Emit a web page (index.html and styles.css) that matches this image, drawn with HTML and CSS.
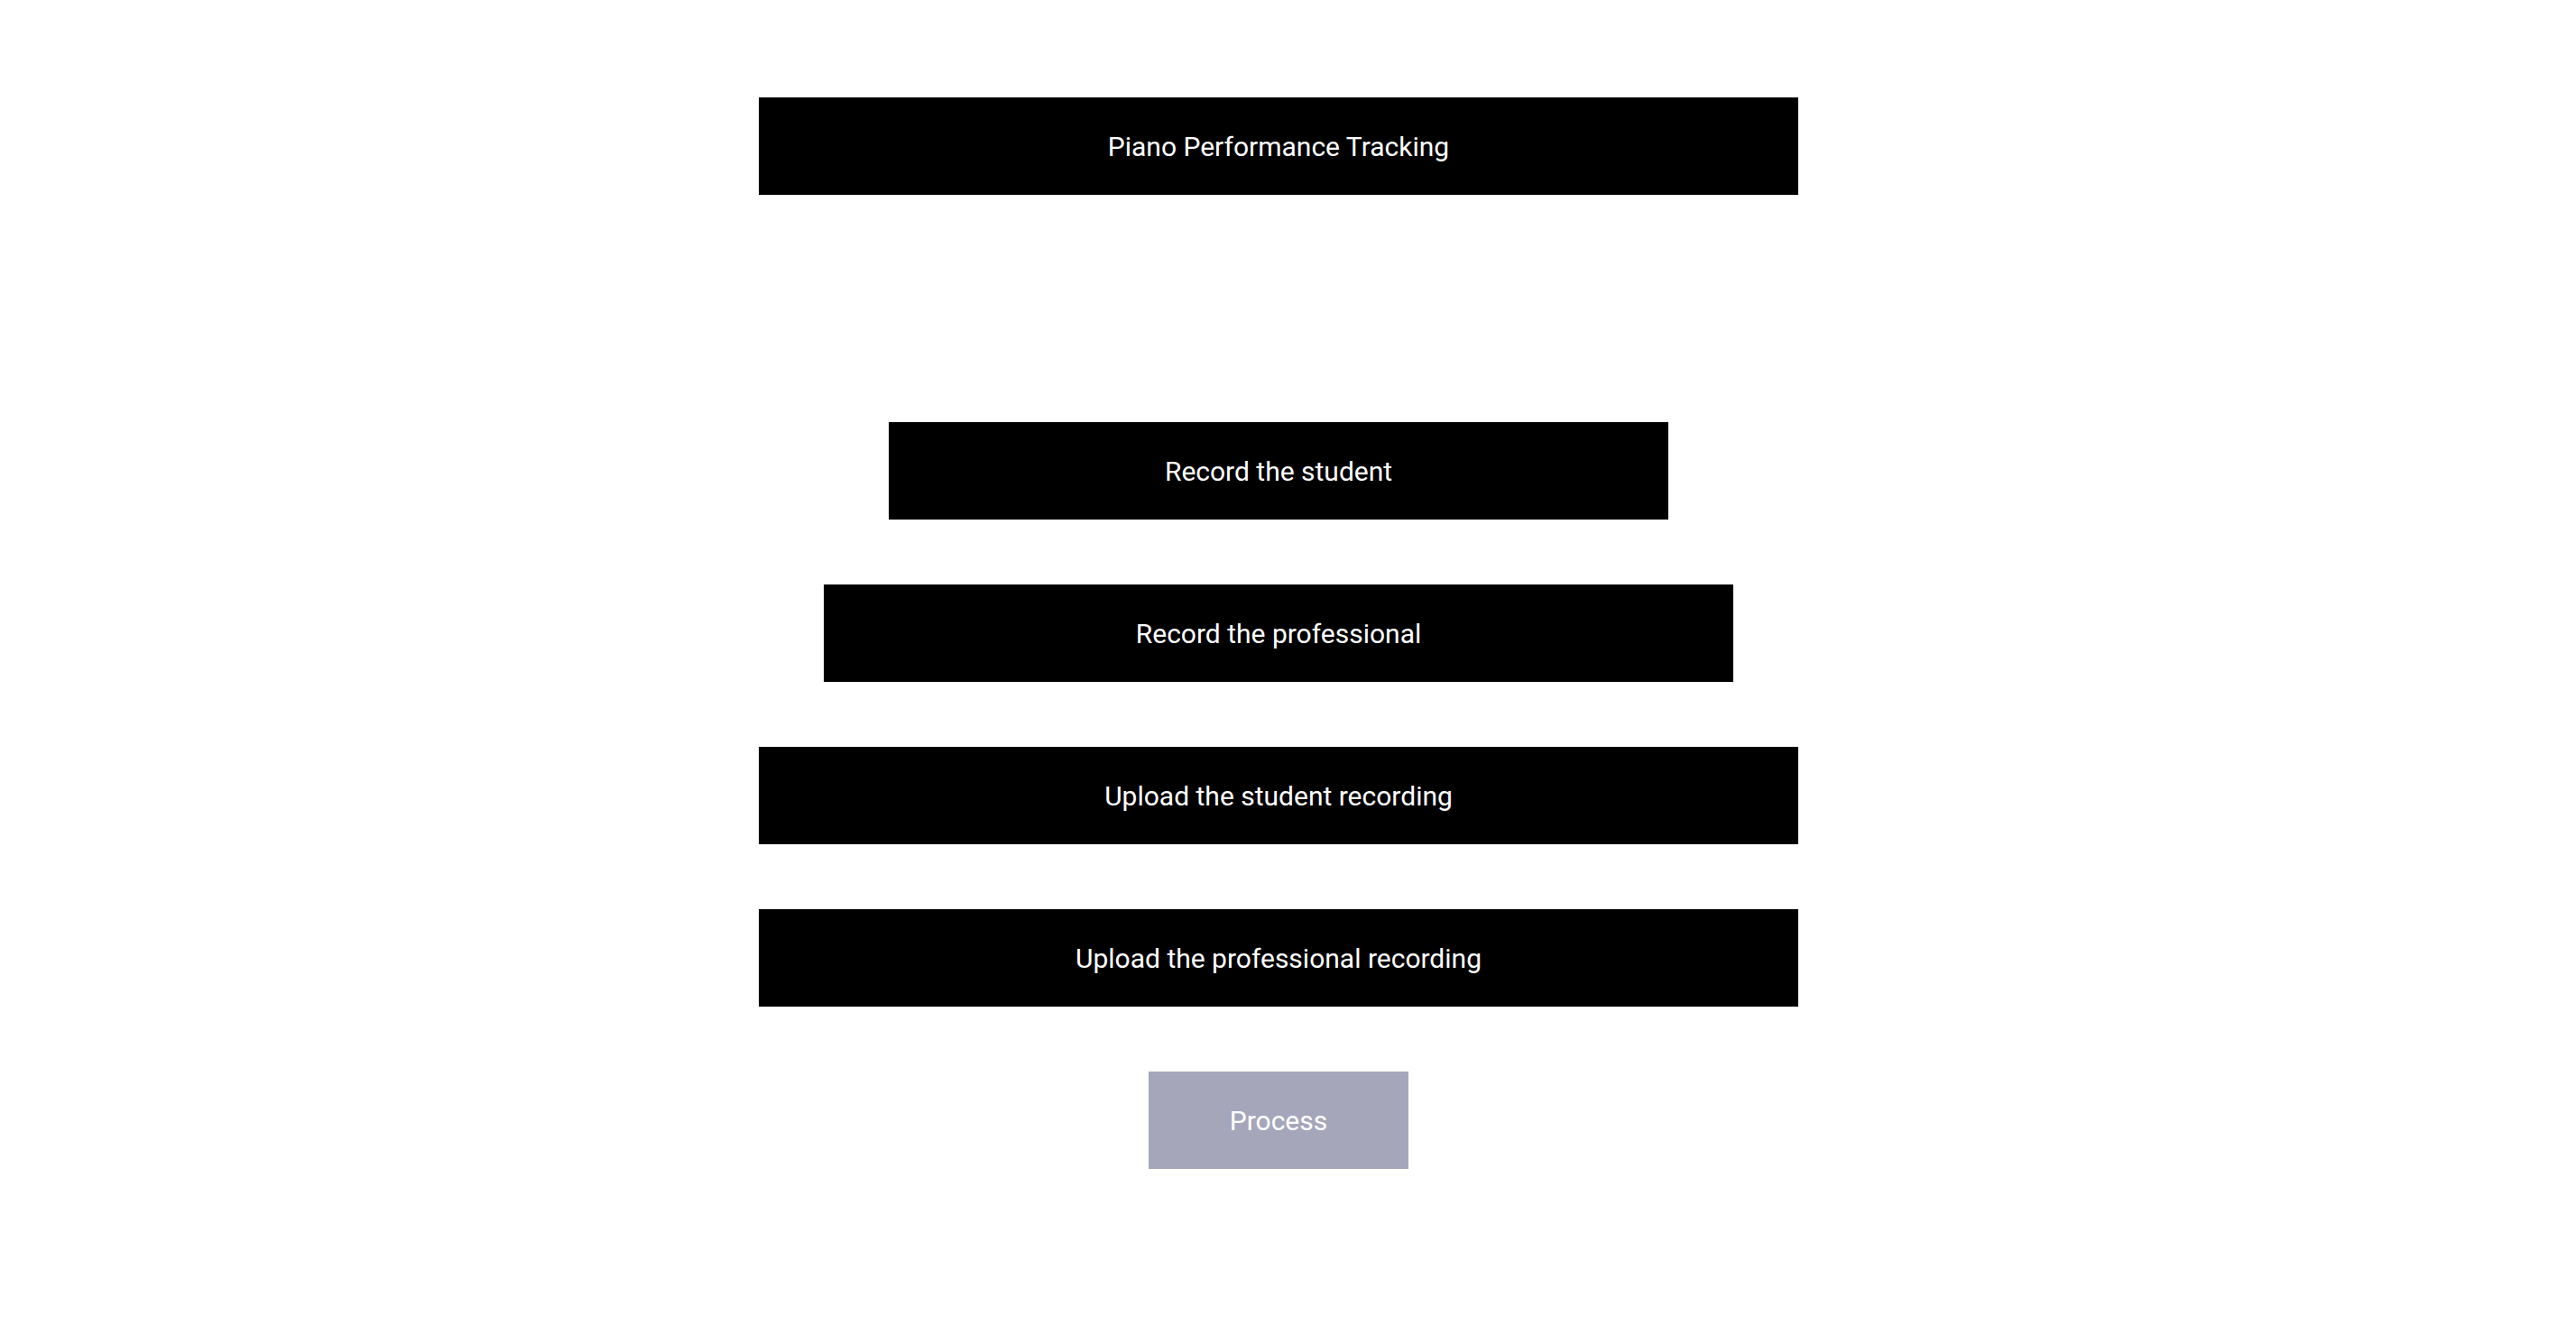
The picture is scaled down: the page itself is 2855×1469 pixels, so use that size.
FILE: index.html
```html
<!DOCTYPE html>
<html>
<head>
<meta charset="utf-8">
<link rel="stylesheet" href="styles.css">
</head>
<body>
<main class="page">
  <div class="bar title">Piano Performance Tracking</div>
  <button class="bar w3">Record the student</button>
  <button class="bar w35">Record the professional</button>
  <button class="bar w4">Upload the student recording</button>
  <button class="bar w4">Upload the professional recording</button>
  <button class="bar process">Process</button>
</main>
</body>
</html>
```
FILE: styles.css
```css
html, body {
  margin: 0;
  padding: 0;
  background: #fff;
}
.page {
  display: flex;
  flex-direction: column;
  align-items: center;
  gap: 72px;
  padding: 108px 21px 0 0;
  font-family: Roboto, "Liberation Sans", sans-serif;
}
.bar {
  height: 108px;
  background: #000;
  color: #fff;
  border: none;
  margin: 0;
  padding: 0;
  display: flex;
  align-items: center;
  justify-content: center;
  font-family: Roboto, "Liberation Sans", sans-serif;
  font-size: 30px;
  font-weight: 400;
}
.title {
  width: 1152px;
  margin-bottom: 180px;
}
.w3 { width: 864px; }
.w35 { width: 1008px; }
.w4 { width: 1152px; }
.process {
  width: 288px;
  background: #a6a6bb;
}
```
